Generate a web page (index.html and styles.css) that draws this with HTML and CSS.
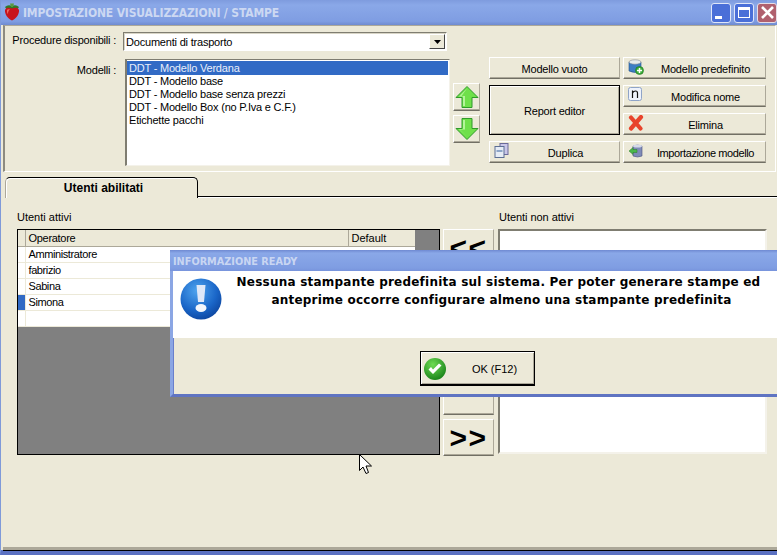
FILE: index.html
```html
<!DOCTYPE html>
<html lang="it">
<head>
<meta charset="utf-8">
<title>Impostazione visualizzazioni / stampe</title>
<link rel="stylesheet" href="styles.css">
</head>
<body>
<div class="win">
  <header class="title">
    <svg class="logo" width="20" height="20" viewBox="0 0 20 20"><path d="M3 5 Q6 2 10 4 Q14 2 17 5 L15 8 H5Z" fill="#2f7a2a"/><path d="M10 18.500 C6 17 2.500 12 3 8 C4 5 8 5.500 10 6.500 C12 5.500 16 5 17 8 C17.500 12 14 17 10 18.500Z" fill="#c8141c"/><path d="M5 8 C5.500 7 7 7 8 7.500 C6.500 8.500 6 10 6 12 C5 11 4.800 9.500 5 8Z" fill="#ee6a60"/><path d="M8 1.500 L12 1.500 L11 5 H9Z" fill="#5a9a3c"/></svg>
    <span class="title-text">IMPOSTAZIONE VISUALIZZAZIONI / STAMPE</span>
    <div class="caption">
      <span class="cap cap-min"><i></i></span>
      <span class="cap cap-max"><i></i></span>
      <span class="cap cap-close"><svg width="15" height="15" viewBox="0 0 15 15"><path d="M2 2 L13 13 M13 2 L2 13" stroke="#fff" stroke-width="2.600"/></svg></span>
    </div>
  </header>
  <div class="content">
    <section class="group">
      <div class="row-proc">
        <label class="lbl">Procedure disponibili :</label>
        <div class="combo"><span class="combo-text">Documenti di trasporto</span><span class="combo-btn"><svg width="7" height="4" viewBox="0 0 7 4"><path d="M0 0H7L3.500 4Z" fill="#000"/></svg></span></div>
      </div>
      <div class="row-models">
        <label class="lbl lbl-mod">Modelli :</label>
        <ul class="listbox">
          <li class="sel">DDT - Modello Verdana</li>
          <li>DDT - Modello base</li>
          <li>DDT - Modello base senza prezzi</li>
          <li>DDT - Modello Box (no P.Iva e C.F.)</li>
          <li>Etichette pacchi</li>
        </ul>
        <div class="arrows">
          <button class="btn arrow-btn"><svg width="24" height="24" viewBox="0 0 24 24"><path d="M12 1.500 L23 12.500 H17 V22.500 H7 V12.500 H1Z" fill="#6fe04a" stroke="#2f9a2a"/><path d="M12 3.500 L4 11.500 H8 V21 H10 V11 H6.500Z" fill="#b4f59a"/></svg></button>
          <button class="btn arrow-btn"><svg width="24" height="24" viewBox="0 0 24 24"><path d="M12 22.500 L23 11.500 H17 V1.500 H7 V11.500 H1Z" fill="#6fe04a" stroke="#2f9a2a"/><path d="M8 3 H10 V12.500 H5 L12 19.500 L4 12 H8Z" fill="#b4f59a"/></svg></button>
        </div>
        <div class="actions">
          <button class="btn">Modello vuoto</button>
          <button class="btn btn-icon">
            <svg width="16" height="16" viewBox="0 0 16 16"><path d="M1 3 V12 Q7 15 13 12 V3Z" fill="#3d7ec4" stroke="#27508c" stroke-width=".6"/><ellipse cx="7" cy="3" rx="6" ry="2.200" fill="#e8ecec" stroke="#8a8f96" stroke-width=".6"/><circle cx="11.500" cy="11.500" r="4" fill="#3bae3b" stroke="#1c6e1c" stroke-width=".6"/><path d="M11.500 9 V14 M9 11.500 H14" stroke="#fff" stroke-width="1.500"/></svg>
            <span>Modello predefinito</span>
          </button>
          <button class="btn btn-default">Report editor</button>
          <button class="btn btn-icon">
            <svg width="16" height="16" viewBox="0 0 16 16"><rect x=".5" y=".5" width="13" height="13" rx="2" fill="#eef2fb" stroke="#8fa4c8"/><path d="M4.500 3.500 V11 M4.500 6 Q5.500 4 7.500 4 Q9.500 4 9.500 6 V11" fill="none" stroke="#111" stroke-width="1.200"/></svg>
            <span>Modifica nome</span>
          </button>
          <button class="btn btn-icon">
            <svg width="16" height="16" viewBox="0 0 16 16"><path d="M3 2.500 L12.500 13.500 M13 2 L3 13.500" stroke="#e8442c" stroke-width="4.200" stroke-linecap="round"/></svg>
            <span>Elimina</span>
          </button>
          <button class="btn btn-icon">
            <svg width="16" height="16" viewBox="0 0 16 16"><rect x="6" y=".5" width="8" height="11" fill="#c9c6e8" stroke="#6a6a9a"/><rect x="1" y="3.500" width="9" height="11" fill="#e6ecf5" stroke="#5c6f94"/><rect x="2.500" y="7" width="6" height="2" fill="#8ea6c8"/></svg>
            <span>Duplica</span>
          </button>
          <button class="btn btn-icon">
            <svg width="16" height="16" viewBox="0 0 16 16"><path d="M5 3 Q9.500 1 14 3 V13 Q9.500 15 5 13Z" fill="#7f8bb8" stroke="#4a527c" stroke-width=".6"/><ellipse cx="9.500" cy="3" rx="4.500" ry="1.500" fill="#d5d9e8"/><path d="M1 8 L5 4.500 V6.500 H9 V9.500 H5 V11.500Z" fill="#49b84a" stroke="#2a7a2a" stroke-width=".5"/></svg>
            <span class="tight">Importazione modello</span>
          </button>
        </div>
      </div>
    </section>
    <nav class="tabs">
      <div class="tab">Utenti abilitati</div>
      <div class="tab-fill"></div>
    </nav>
    <section class="tab-panel">
      <div class="cap-lbl">Utenti attivi</div>
      <div></div>
      <div class="cap-lbl">Utenti non attivi</div>
      <div class="grid-box">
        <table class="users">
          <thead>
            <tr><th class="ind"></th><th class="op">Operatore</th><th class="def">Default</th></tr>
          </thead>
          <tbody>
            <tr><td class="ind"></td><td>Amministratore</td><td></td></tr>
            <tr><td class="ind"></td><td>fabrizio</td><td></td></tr>
            <tr><td class="ind"></td><td>Sabina</td><td></td></tr>
            <tr><td class="ind cur"></td><td>Simona</td><td></td></tr>
            <tr><td class="ind"></td><td></td><td></td></tr>
          </tbody>
        </table>
      </div>
      <div class="moves">
        <button class="btn move">&lt;&lt;</button>
        <button class="btn move move-push"></button>
        <button class="btn move">&gt;&gt;</button>
      </div>
      <div class="inactive"></div>
    </section>
  </div>
</div>

<div class="dialog">
  <div class="dlg-title">INFORMAZIONE READY</div>
  <div class="dlg-body">
    <svg class="dlg-icon" width="42" height="42" viewBox="0 0 42 42">
      <defs><radialGradient id="g" cx=".4" cy=".3" r=".8"><stop offset="0" stop-color="#4fa4ee"/><stop offset=".6" stop-color="#1a66c8"/><stop offset="1" stop-color="#0a3e96"/></radialGradient></defs>
      <circle cx="21" cy="21" r="20.500" fill="url(#g)"/>
      <path d="M16.500 7 H25.500 L24 24 H18Z" fill="#dfe8f8"/>
      <ellipse cx="21" cy="30" rx="5.500" ry="4" fill="#f4f7fc"/>
    </svg>
    <p class="dlg-msg"><span class="line-a">Nessuna stampante predefinita sul sistema. Per poter generare stampe ed</span><span class="line-b">anteprime occorre configurare almeno una stampante predefinita</span></p>
  </div>
  <div class="dlg-foot">
    <button class="btn btn-default ok">
      <svg width="24" height="24" viewBox="0 0 24 24"><defs><radialGradient id="k" cx=".4" cy=".3" r=".8"><stop offset="0" stop-color="#6fdc54"/><stop offset="1" stop-color="#107a14"/></radialGradient></defs><circle cx="12" cy="12" r="11" fill="url(#k)"/><path d="M5.500 12.500 L10 17 L18.500 8.500 L16 6.500 L10 12.500 L8 10Z" fill="#fff"/></svg>
      <span>OK (F12)</span>
    </button>
  </div>
</div>

<svg class="pointer" width="14" height="21" viewBox="0 0 14 21"><path d="M.5 .5 V16.500 L4 13 L7 19.500 L9.500 18.500 L7 12 H12.500Z" fill="#fff" stroke="#000"/></svg>
</body>
</html>
```
FILE: styles.css
```css
* { box-sizing: border-box; }
html, body { margin: 0; padding: 0; }
body {
  width: 777px;
  height: 555px;
  overflow: hidden;
  position: relative;
  font-family: "Liberation Sans", Arial, sans-serif;
  font-size: 11px;
  letter-spacing: -.2px;
  color: #000;
  background: #ece9d8;
}
.win {
  height: 555px;
  display: flex;
  flex-direction: column;
  background: #ece9d8;
  border-left: 1px solid #7f9ad9;
  border-bottom: 5px solid #5b71c2;
}
.title {
  height: 25px;
  flex: none;
  display: flex;
  align-items: center;
  padding: 0 0 0 1px;
  background: linear-gradient(#7e9bde, #8aa8e8 20%, #7f9de2 85%, #6f8bd0);
}
.logo { margin-top: -2px; }
.title-text {
  margin-left: 1px;
  font-family: "DejaVu Sans Condensed", "DejaVu Sans", sans-serif;
  font-weight: bold;
  font-size: 12px;
  color: #ccd8f2;
  letter-spacing: -.15px;
}
.caption { margin-left: auto; display: flex; gap: 3px; }
.cap {
  width: 20px;
  height: 20px;
  border: 1px solid #dfe6f8;
  border-radius: 3px;
  background: #4a6fd8;
  display: flex;
  align-items: center;
  justify-content: center;
}
.cap-min i { display: block; width: 7px; height: 3px; background: #fff; margin: 9px 5px 0 0; }
.cap-max i { display: block; width: 12px; height: 11px; border: 1px solid #fff; border-top-width: 3px; }
.cap-close { background: #b0606e; border-color: #e6dde6; }

.content {
  flex: 1;
  display: flex;
  flex-direction: column;
  min-height: 0;
  margin-left: 2px;
  border-bottom: 3px solid #aca899;
  box-shadow: 0 1px 0 #000;
}
.group {
  height: 147px;
  flex: none;
  margin-right: 1px;
  padding-top: 6px;
  border: 1px solid #fff;
  border-top: 1px solid #aca899;
  border-left: 2px solid #8d8b80;
}
.row-proc { display: flex; height: 19px; }
.lbl { width: 111px; text-align: right; padding-top: 2px; flex: none; margin-right: 7px; }
.combo {
  width: 324px;
  height: 19px;
  background: #fff;
  display: flex;
  align-items: center;
  border: 1px solid #fff;
  border-top-color: #7f7d71;
  border-left-color: #7f7d71;
  box-shadow: inset 1px 1px 0 #d8d5c6;
}
.combo-text { padding-left: 2px; flex: 1; }
.combo-btn {
  width: 16px;
  height: 15px;
  margin-right: 1px;
  background: #ece9d8;
  border: 1px solid;
  border-color: #fff #444 #444 #fff;
  display: flex;
  align-items: center;
  justify-content: center;
}
.row-models { display: flex; margin-top: 6px; }
.lbl-mod { padding-top: 7px; margin-right: 9px; }
.listbox {
  list-style: none;
  margin: 2px 0 0;
  padding: 1px 1px 0 0;
  width: 325px;
  height: 107px;
  background: #fff;
  border: 1px solid #f4f2ea;
  border-top-color: #7f7d71;
  border-left: 2px solid #7f7d71;
}
.listbox li { height: 13px; line-height: 13px; padding-left: 2px; white-space: nowrap; }
.listbox .sel { background: #316ac5; color: #e8eefa; height: 14px; line-height: 14px; }
.arrows {
  display: flex;
  flex-direction: column;
  gap: 4px;
  margin: 26px 9px 0 3px;
}
.btn {
  font: inherit;
  letter-spacing: inherit;
  color: #000;
  padding: 1px 0 0;
  margin: 0;
  background: #ece9d8;
  border: 1px solid;
  border-color: #fff #aca899 #716f64 #fff;
  box-shadow: inset 0 -1px 0 #aca899;
  display: flex;
  align-items: center;
  justify-content: center;
}
.arrow-btn { width: 27px; height: 28px; padding: 0 0 1px; }
.actions {
  display: grid;
  grid-template-columns: 131px 143px;
  grid-auto-rows: 22px;
  gap: 6px 3px;
}
.btn-default {
  grid-row: span 2;
  border: 1px solid #000;
  box-shadow: inset 1px 1px 0 #fff, inset -1px -1px 0 #aca899;
}
.btn-icon { justify-content: flex-start; padding-left: 4px; }
.btn-icon svg { flex: none; margin-top: -3px; }
.btn-icon span { flex: 1; text-align: center; padding-left: 2px; }
.tight { letter-spacing: -.4px; }

.tabs { height: 26px; flex: none; display: flex; align-items: flex-end; padding-left: 2px; }
.tab {
  width: 193px;
  height: 21px;
  padding-left: 4px;
  background: #ece9d8;
  border: 1px solid #000;
  border-left-color: #aca899;
  border-bottom: none;
  border-radius: 5px 5px 0 0;
  box-shadow: inset 1px 1px 0 #fff;
  text-align: center;
  font-weight: bold;
  font-size: 12px;
  letter-spacing: 0;
  line-height: 20px;
}
.tab-fill { flex: 1; height: 2px; border-top: 1px solid #000; border-bottom: 1px solid #fff; }
.tab-panel {
  flex: 1;
  min-height: 0;
  display: grid;
  grid-template-columns: 423px 51px 270px;
  grid-template-rows: 18px 227px;
  column-gap: 3px;
  padding: 13px 0 0 14px;
  align-content: start;
}
.cap-lbl { line-height: 13px; letter-spacing: 0; }
.tab-panel > :nth-child(3) { margin-left: 2px; letter-spacing: -.05px; }
.grid-box {
  height: 226px;
  background: #808080;
  border: 1px solid #000;
}
.users {
  width: 397px;
  border-collapse: collapse;
  table-layout: fixed;
  background: #fff;
}
.users th {
  height: 16px;
  padding: 0 0 0 3px;
  background: #ece9d8;
  font-weight: normal;
  text-align: left;
  letter-spacing: -.3px;
  border-right: 1px solid #aca899;
  border-bottom: 1px solid #aca899;
}
.users th.ind { width: 7px; padding: 0; }
.users th.def { width: 67px; border-right: none; letter-spacing: 0; }
.users td {
  height: 16px;
  padding: 0 0 0 3px;
  letter-spacing: -.4px;
  border-bottom: 1px solid #ece9d8;
}
.users td.ind { background: #fff; border-right: 1px solid #ece9d8; padding: 0; }
.users td.cur { background: #316ac5; }
.moves { height: 227px; display: flex; flex-direction: column; gap: 4px; }
.move { height: 37px; font-family: "Liberation Sans", sans-serif; font-weight: bold; font-size: 30px; letter-spacing: 1.5px; line-height: 1; flex: none; }
.move-push { margin-top: auto; }
.inactive {
  height: 225px;
  margin-left: 1px;
  background: #fff;
  border: 2px solid #f4f2ea;
  border-top-color: #7f7d71;
  border-left-color: #7f7d71;
}

.dialog {
  position: absolute;
  left: 170px;
  top: 250px;
  width: 607px;
  height: 147px;
  display: flex;
  flex-direction: column;
  border-left: 3px solid #8ba6e4;
  border-bottom: 3px solid #5f74c2;
  background: #ece9d8;
  box-shadow: inset 1px 0 0 #6a80cc;
  letter-spacing: 0;
}
.dlg-title {
  height: 21px;
  flex: none;
  margin-left: -3px;
  padding-left: 3px;
  background: linear-gradient(#6f8ad2, #8aa8e8 15%, #7f9de2 85%, #7894dc);
  color: #c9d6f2;
  font-family: "DejaVu Sans Condensed", "DejaVu Sans", sans-serif;
  font-weight: bold;
  font-size: 10.8px;
  line-height: 23px;
}
.dlg-body {
  height: 67px;
  flex: none;
  display: flex;
  background: #fff;
}
.dlg-icon { margin: 7px 0 0 7px; flex: none; }
.dlg-msg {
  flex: 1;
  margin: 0;
  padding-top: 2px;
  text-align: center;
  font-family: "DejaVu Sans", sans-serif;
  font-weight: bold;
  font-size: 12px;
  letter-spacing: .22px;
  line-height: 18px;
}
.line-a { display: block; padding-right: 2px; }
.line-b { display: block; padding-left: 4px; }
.dlg-foot { flex: 1; padding: 13px 0 0 247px; }
.ok { width: 115px; height: 35px; justify-content: flex-start; padding: 1px 0 0 2px; border-bottom-width: 2px; }
.ok span { flex: 1; text-align: center; padding: 1px 0 0 8px; }
.pointer { position: absolute; left: 359px; top: 454px; }
```
